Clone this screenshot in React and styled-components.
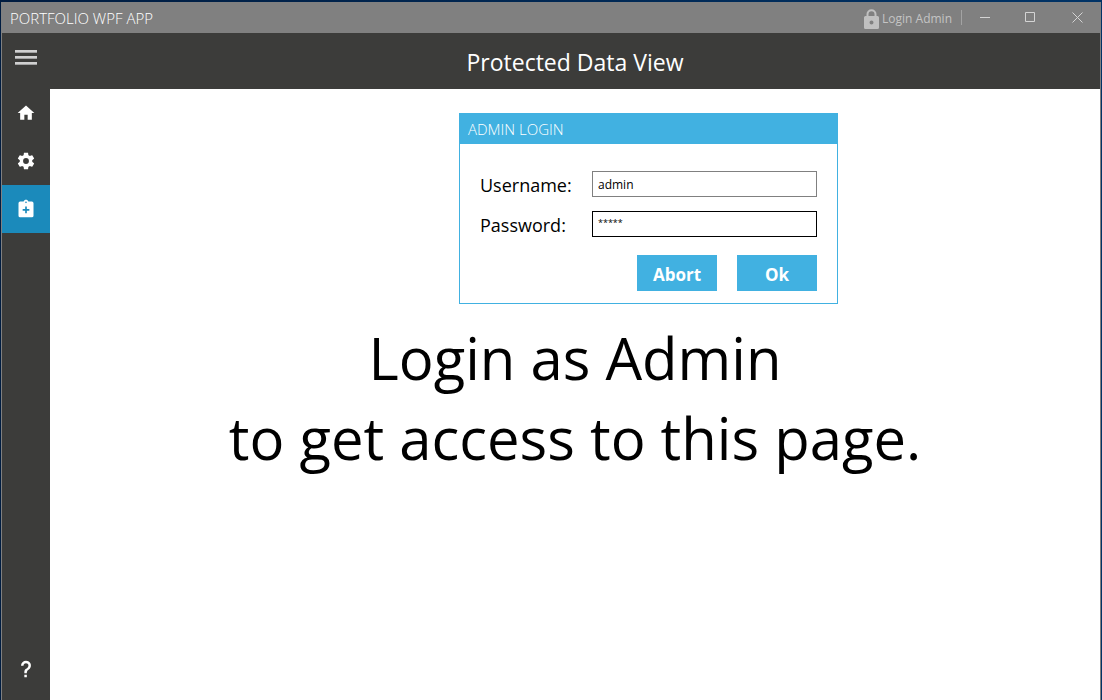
import React from 'react';
import styled, { createGlobalStyle } from 'styled-components';

const GlobalStyle = createGlobalStyle`
  *, *::before, *::after { box-sizing: border-box; }
  body { margin: 0; background: #00254f; }
  body, button, input { font-family: "Open Sans", "Noto Sans", sans-serif; }
`;

const Desktop = styled.div`
  min-height: 100vh;
  display: flex;
  padding: 2px 1px 0;
  background: linear-gradient(90deg, #001c40, #003366);
`;

const Window = styled.div`
  flex: 1;
  display: flex;
  flex-direction: column;
  border: solid #808080;
  border-width: 0 1px;
  background: #fff;
`;

const TitleBar = styled.header`
  display: flex;
  align-items: center;
  height: 31px;
  padding-left: 8px;
  background: #808080;
`;

const AppName = styled.span`
  flex: 1;
  color: #fff;
  font-size: 15px;
  font-weight: 300;
  line-height: 30px;
`;

const LoginButton = styled.button`
  display: flex;
  align-items: center;
  gap: 3px;
  height: 31px;
  padding: 2px 9px 0 0;
  border: 0;
  background: none;
  color: #c4c4c4;
  font-size: 12px;
`;

const Divider = styled.span`
  width: 1px;
  height: 15px;
  background: #a3a3a3;
`;

const CaptionButton = styled.button`
  display: grid;
  place-items: center;
  width: 46px;
  height: 31px;
  padding: 0;
  border: 0;
  background: none;
  color: #d4d4d4;
`;

const PageHeader = styled.div`
  display: grid;
  grid-template-columns: 48px 1fr;
  height: 56px;
  background: #3c3c3a;
`;

const MenuButton = styled.button`
  display: grid;
  place-items: center;
  height: 48px;
  padding: 0;
  border: 0;
  background: none;
`;

const PageTitle = styled.h1`
  margin: 0;
  color: #fff;
  font-size: 23px;
  font-weight: 400;
  line-height: 58px;
  text-align: center;
`;

const Body = styled.div`
  flex: 1;
  display: flex;
`;

const Sidebar = styled.nav`
  display: flex;
  flex-direction: column;
  width: 48px;
  padding-bottom: 7px;
  background: #3c3c3a;
`;

const NavButton = styled.button`
  display: grid;
  place-items: center;
  height: 48px;
  padding: 0;
  border: 0;
  background: ${({ $active }) => ($active ? '#1b8abb' : 'transparent')};
  color: #fff;
`;

const Spacer = styled.div`
  flex: 1;
`;

const Content = styled.main`
  flex: 1;
  display: flex;
  flex-direction: column;
  align-items: center;
  gap: 14px;
  padding-top: 24px;
`;

const DialogRow = styled.div`
  padding-left: 147px;
`;

const Dialog = styled.form`
  width: 379px;
  border: 1px solid #41b1e1;
  background: #fff;
`;

const DialogTitle = styled.h2`
  margin: 0;
  padding-left: 8px;
  background: #41b1e1;
  color: #fff;
  font-size: 15px;
  font-weight: 300;
  line-height: 30px;
`;

const Fields = styled.div`
  display: flex;
  flex-direction: column;
  gap: 14px;
  padding: 27px 20px 12px;
`;

const Field = styled.div`
  display: grid;
  grid-template-columns: 112px 1fr;
  align-items: center;
`;

const Label = styled.label`
  padding-top: 2px;
  color: #000;
  font-size: 18px;
  line-height: 24px;
`;

const TextBox = styled.input`
  width: 100%;
  height: 26px;
  padding: 0 5px;
  border: 1px solid #808080;
  border-radius: 0;
  outline: 0;
  background: #fff;
  color: #000;
  font-size: 12px;
`;

const MaskedBox = styled(TextBox)`
  padding-bottom: 3px;
  border-color: #000;
  font-size: 9px;
`;

const Actions = styled.div`
  display: flex;
  justify-content: flex-end;
  gap: 20px;
  padding-top: 4px;
`;

const ActionButton = styled.button`
  width: 80px;
  height: 36px;
  padding: 2px 0 0;
  border: 0;
  background: #41b1e1;
  color: #fff;
  font-size: 17px;
  font-weight: 700;
`;

const Notice = styled.p`
  margin: 0;
  color: #000;
  font-size: 58px;
  line-height: 80px;
  text-align: center;
`;

const paths = {
  home: 'M10,20V14H14V20H19V12H22L12,3L2,12H5V20H10Z',
  settings:
    'M12,15.5A3.5,3.5 0 0,1 8.5,12A3.5,3.5 0 0,1 12,8.5A3.5,3.5 0 0,1 15.5,12A3.5,3.5 0 0,1 12,15.5M19.43,12.97C19.47,12.65 19.5,12.33 19.5,12C19.5,11.67 19.47,11.34 19.43,11L21.54,9.37C21.73,9.22 21.78,8.95 21.66,8.73L19.66,5.27C19.54,5.05 19.27,4.96 19.05,5.05L16.56,6.05C16.04,5.66 15.5,5.32 14.87,5.07L14.5,2.42C14.46,2.18 14.25,2 14,2H10C9.75,2 9.54,2.18 9.5,2.42L9.13,5.07C8.5,5.32 7.96,5.66 7.44,6.05L4.95,5.05C4.73,4.96 4.46,5.05 4.34,5.27L2.34,8.73C2.21,8.95 2.27,9.22 2.46,9.37L4.57,11C4.53,11.34 4.5,11.67 4.5,12C4.5,12.33 4.53,12.65 4.57,12.97L2.46,14.63C2.27,14.78 2.21,15.05 2.34,15.27L4.34,18.73C4.46,18.95 4.73,19.03 4.95,18.95L7.44,17.94C7.96,18.34 8.5,18.68 9.13,18.93L9.5,21.58C9.54,21.82 9.75,22 10,22H14C14.25,22 14.46,21.82 14.5,21.58L14.87,18.93C15.5,18.67 16.04,18.34 16.56,17.94L19.05,18.95C19.27,19.03 19.54,18.95 19.66,18.73L21.66,15.27C21.78,15.05 21.73,14.78 21.54,14.63L19.43,12.97Z',
  clipboard:
    'M19,3H14.82C14.4,1.84 13.3,1 12,1C10.7,1 9.6,1.84 9.18,3H5A2,2 0 0,0 3,5V20A2,2 0 0,0 5,22H19A2,2 0 0,0 21,20V5A2,2 0 0,0 19,3M12,3A1,1 0 0,1 13,4A1,1 0 0,1 12,5A1,1 0 0,1 11,4A1,1 0 0,1 12,3M16,14H13V17H11V14H8V12H11V9H13V12H16V14Z',
  help: 'M10,19H13V22H10V19M12,2C17.35,2.22 19.68,7.62 16.5,11.67C15.67,12.67 14.33,13.33 13.67,14.17C13,15 13,16 13,17H10C10,15.33 10,13.92 10.67,12.92C11.33,11.92 12.67,11.33 13.5,10.67C15.92,8.43 15.32,5.26 12,5A3,3 0 0,0 9,8H6A6,6 0 0,1 12,2Z',
};

function NavIcon({ name }) {
  return (
    <svg width="20" height="20" viewBox="0 0 24 24" fill="currentColor" fillRule="evenodd" aria-hidden="true">
      <path d={paths[name]} />
    </svg>
  );
}

export default function App() {
  return (
    <Desktop>
      <GlobalStyle />
      <Window>
        <TitleBar>
          <AppName>PORTFOLIO WPF APP</AppName>
          <LoginButton type="button">
            <svg width="15" height="20" viewBox="0 0 15 20" aria-hidden="true">
              <path d="M3.5 8V5.2a4 4 0 0 1 8 0V8" fill="none" stroke="#c0c0c0" strokeWidth="2" />
              <path fillRule="evenodd" fill="#c0c0c0" d="M1.5 7h12A1.5 1.5 0 0 1 15 8.500V18.500A1.500 1.500 0 0 1 13.500 20h-12A1.500 1.500 0 0 1 0 18.500V8.500A1.500 1.500 0 0 1 1.500 7ZM7.500 11.500a2 2 0 1 0 0 4a2 2 0 1 0 0-4Z" />
            </svg>
            Login Admin
          </LoginButton>
          <Divider />
          <CaptionButton type="button" aria-label="Minimize">
            <svg width="11" height="11" viewBox="0 0 11 11" stroke="currentColor"><path d="M0 5.500H10" /></svg>
          </CaptionButton>
          <CaptionButton type="button" aria-label="Maximize">
            <svg width="12" height="11" viewBox="0 0 12 11" stroke="currentColor" fill="none"><path d="M.5 .5H9.500V9.500H.5Z" /></svg>
          </CaptionButton>
          <CaptionButton type="button" aria-label="Close">
            <svg width="11" height="11" viewBox="0 0 11 11" stroke="currentColor"><path d="M.5 .5L10.500 10.500M10.500 .5L.5 10.500" /></svg>
          </CaptionButton>
        </TitleBar>
        <PageHeader>
          <MenuButton type="button" aria-label="Menu">
            <svg width="22" height="15" viewBox="0 0 22 15" aria-hidden="true">
              <path d="M0 0H22V2H0ZM0 6H22V8H0ZM0 12H22V14H0Z" fill="#d0d0d0" />
              <path d="M0 2H22V3H0ZM0 8H22V9H0ZM0 14H22V15H0Z" fill="#a2a2a2" />
            </svg>
          </MenuButton>
          <PageTitle>Protected Data View</PageTitle>
        </PageHeader>
        <Body>
          <Sidebar>
            <NavButton type="button" aria-label="Home"><NavIcon name="home" /></NavButton>
            <NavButton type="button" aria-label="Settings"><NavIcon name="settings" /></NavButton>
            <NavButton type="button" aria-label="Protected data" $active><NavIcon name="clipboard" /></NavButton>
            <Spacer />
            <NavButton type="button" aria-label="Help"><NavIcon name="help" /></NavButton>
          </Sidebar>
          <Content>
            <DialogRow>
              <Dialog onSubmit={(e) => e.preventDefault()}>
                <DialogTitle>ADMIN LOGIN</DialogTitle>
                <Fields>
                  <Field>
                    <Label htmlFor="username">Username:</Label>
                    <TextBox id="username" type="text" defaultValue="admin" />
                  </Field>
                  <Field>
                    <Label htmlFor="password">Password:</Label>
                    <MaskedBox id="password" type="text" autoComplete="off" defaultValue="*****" />
                  </Field>
                  <Actions>
                    <ActionButton type="button">Abort</ActionButton>
                    <ActionButton type="submit">Ok</ActionButton>
                  </Actions>
                </Fields>
              </Dialog>
            </DialogRow>
            <Notice>
              Login as Admin
              <br />
              to get access to this page.
            </Notice>
          </Content>
        </Body>
      </Window>
    </Desktop>
  );
}
